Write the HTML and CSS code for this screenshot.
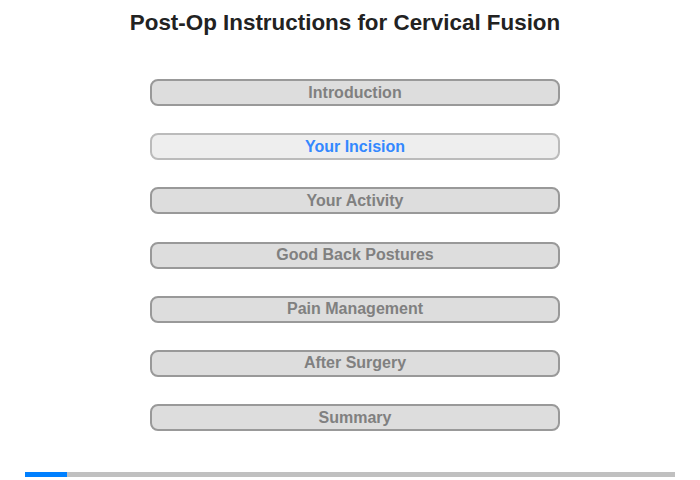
FILE: index.html
```html
<!DOCTYPE html>
<html lang="en">
<head>
    <meta charset="UTF-8">
    <title>Post-Op Instructions for Cervical Fusion</title>
    <link rel="stylesheet" href="styles.css">
</head>
<body>
    <h1>Post-Op Instructions for Cervical Fusion</h1>

    <div class="menu">
        <button class="item">Introduction</button>
        <button class="item active">Your Incision</button>
        <button class="item">Your Activity</button>
        <button class="item">Good Back Postures</button>
        <button class="item">Pain Management</button>
        <button class="item">After Surgery</button>
        <button class="item">Summary</button>
    </div>

    <div class="progress">
        <div class="progress-fill" style="width: 42px;"></div>
    </div>
</body>
</html>
```
FILE: styles.css
```css
body {
    font-family: "Liberation Sans", Arial, sans-serif;
    margin: 0;
    width: 700px;
    height: 480px;
    background-color: #fff;
}
h1 {
    font-size: 22.4px;
    color: #222;
    text-align: center;
    margin: 0;
    padding: 10px 10px 0 0;
    line-height: 26px;
}
.menu {
    display: flex;
    flex-direction: column;
    gap: 27.2px;
    margin-top: 43px;
    padding-left: 150px;
}
.item {
    width: 410px;
    height: 27px;
    background-color: #ddd;
    border: 2px solid #999;
    border-radius: 8px;
    font-family: "Liberation Sans", Arial, sans-serif;
    font-size: 16px;
    font-weight: bold;
    color: #808080;
    padding: 0;
    cursor: pointer;
}
.item.active {
    background-color: #eee;
    border-color: #bbb;
    color: #3388ff;
}
.progress {
    margin: 41px 25px 0;
    height: 5px;
    background-color: #c0c0c0;
}
.progress-fill {
    height: 5px;
    background-color: #0080ff;
}
```
